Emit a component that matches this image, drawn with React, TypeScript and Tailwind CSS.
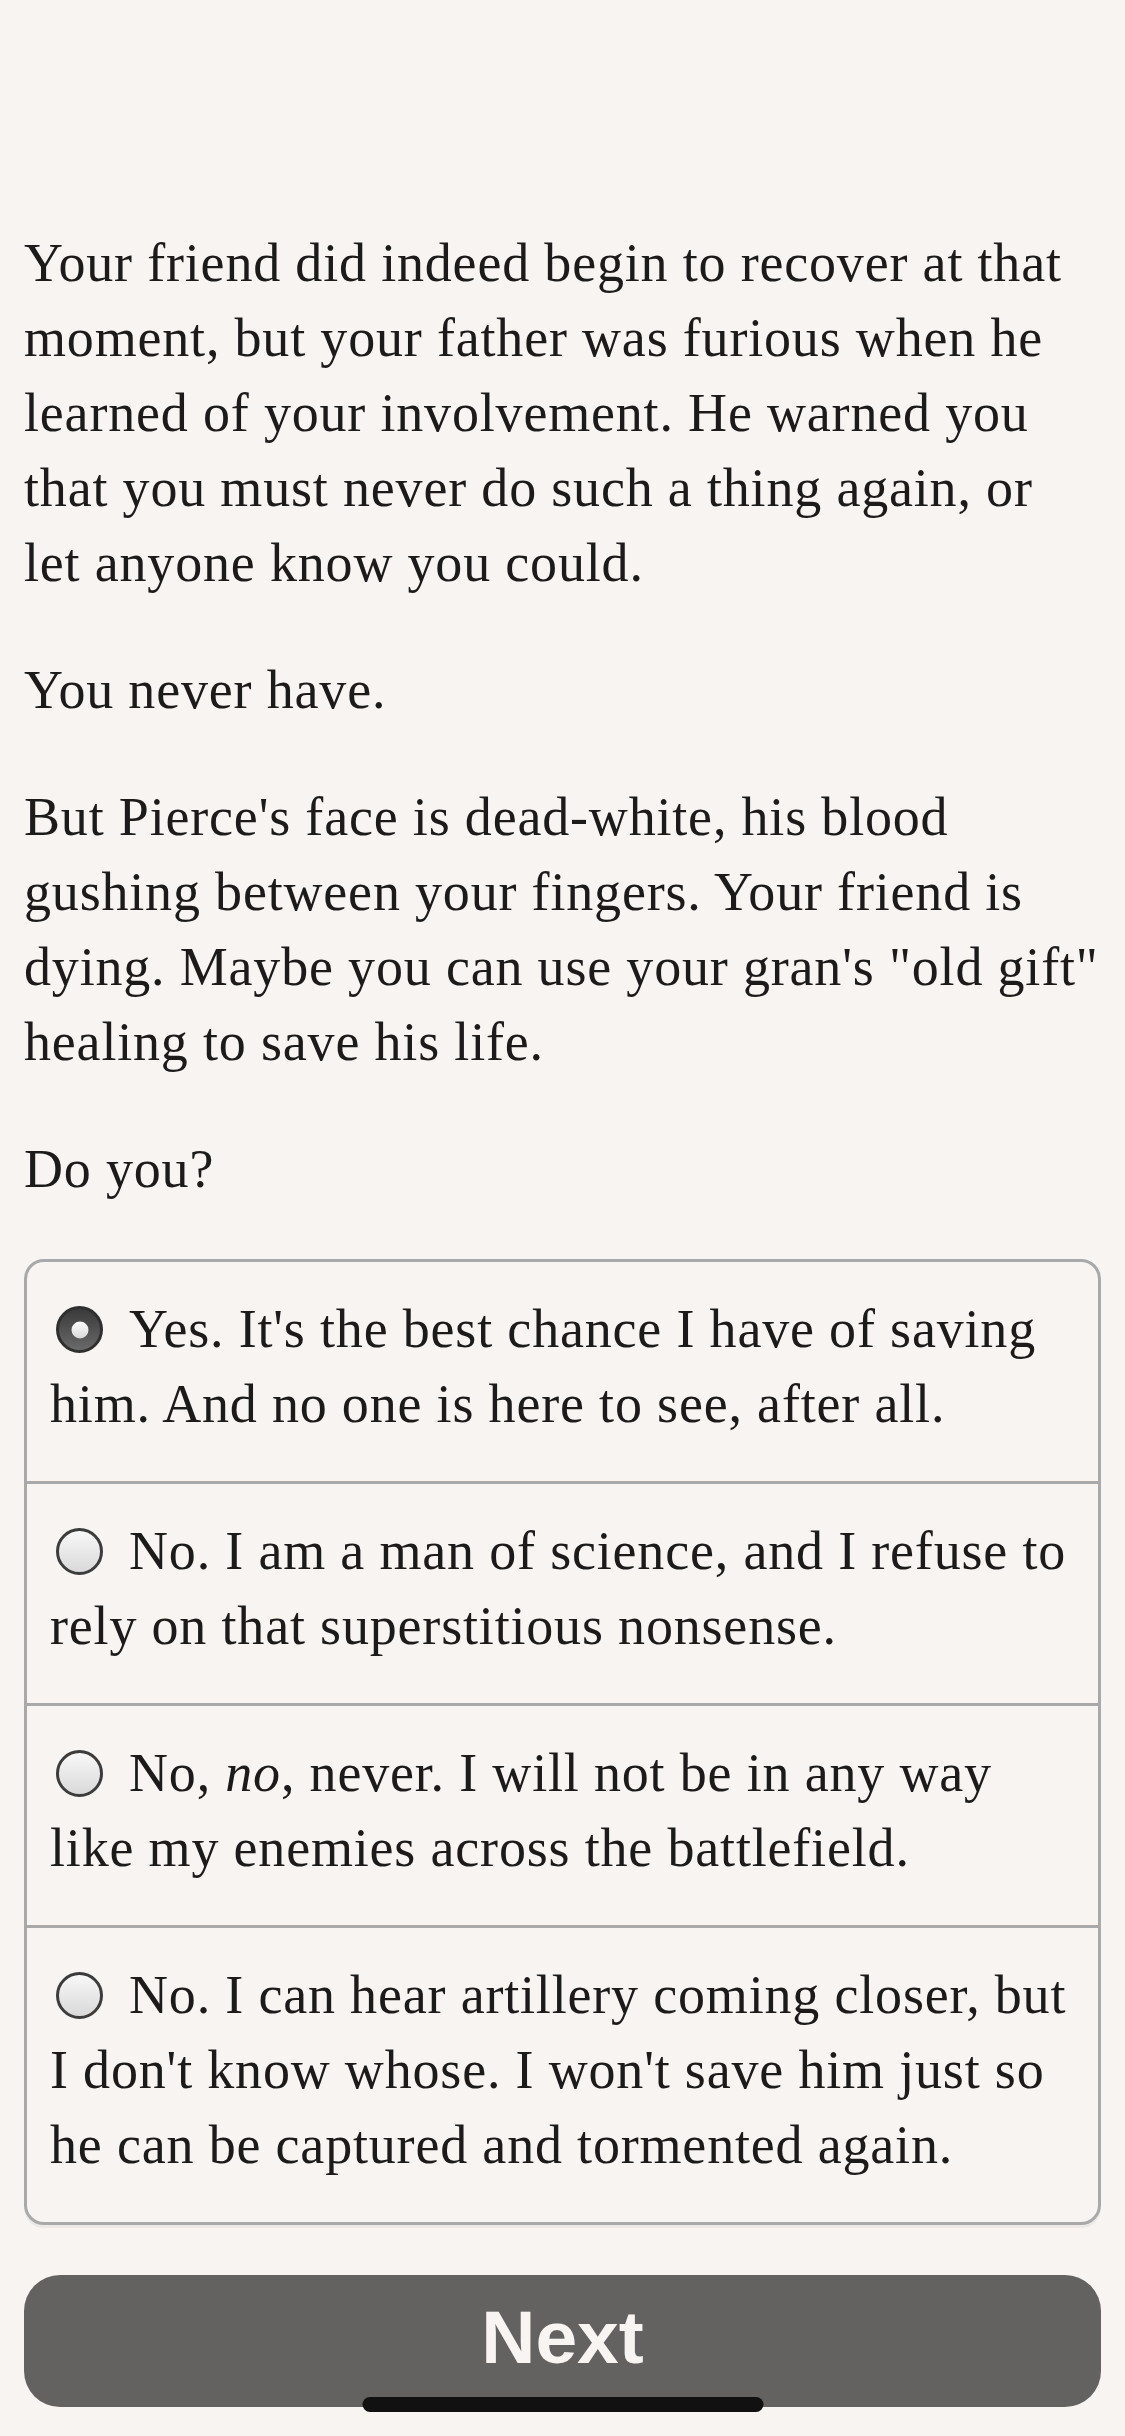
import { useState } from "react";

const options = [
  { id: "yes", label: <>Yes. It's the best chance I have of saving him. And no one is here to see, after all.</> },
  { id: "science", label: <>No. I am a man of science, and I refuse to rely on that superstitious nonsense.</> },
  {
    id: "never",
    label: (
      <>
        No, <em>no</em>, never. I will not be in any way like my enemies across the battlefield.
      </>
    ),
  },
  {
    id: "artillery",
    label: <>No. I can hear artillery coming closer, but I don't know whose. I won't save him just so he can be captured and tormented again.</>,
  },
];

function Radio({ checked }: { checked: boolean }) {
  if (checked) {
    return (
      <span className="relative mr-[26px] ml-[6px] inline-block h-[47px] w-[47px] rounded-full border-[3px] border-[#2f2f2f] bg-gradient-to-b from-[#3a3a3a] to-[#6a6a6a] align-[-6px]">
        <span className="absolute top-1/2 left-1/2 h-[17px] w-[17px] -translate-x-1/2 -translate-y-1/2 rounded-full bg-gradient-to-b from-[#ffffff] to-[#d8d8d8]" />
      </span>
    );
  }
  return (
    <span className="mr-[26px] ml-[6px] inline-block h-[47px] w-[47px] rounded-full border-[3px] border-[#3c3c3c] bg-gradient-to-b from-[#f8f8f8] to-[#d9d9d9] align-[-6px]" />
  );
}

export default function App() {
  const [choice, setChoice] = useState("yes");

  return (
    <main
      className="min-h-[2436px] bg-[#f7f4f1] px-[24px] pt-[226px] text-[#1c1b1a]"
      style={{ fontFamily: '"Liberation Serif", "Times New Roman", serif' }}
    >
      <div className="space-y-[52px] text-[54px] leading-[75px] tracking-[0.82px]">
        <p>
          Your friend did indeed begin to recover at that moment, but your father was furious when he learned of your
          involvement. He warned you that you must never do such a thing again, or let anyone know you could.
        </p>
        <p>You never have.</p>
        <p>
          But Pierce's face is dead-white, his blood gushing between your fingers. Your friend is dying. Maybe you can
          use your gran's "old gift" healing to save his life.
        </p>
        <p>Do you?</p>
      </div>

      <div className="mt-[52px] overflow-hidden rounded-[20px] border-[3px] border-[#a9a9a9] shadow-[0_3px_0_#ece9e6]">
        {options.map((option, i) => (
          <div
            key={option.id}
            onClick={() => setChoice(option.id)}
            className={`cursor-pointer px-[23px] pt-[30px] pb-[39px] text-[54px] leading-[75px] tracking-[0.82px] ${
              i > 0 ? "border-t-[3px] border-[#a9a9a9]" : ""
            }`}
          >
            <Radio checked={choice === option.id} />
            {option.label}
          </div>
        ))}
      </div>

      <button
        type="button"
        className="mt-[50px] flex h-[132px] w-full items-center justify-center rounded-[36px] bg-[#636261] pb-[8px] text-[75px] font-bold text-[#f7f4f1]"
        style={{ fontFamily: '"Liberation Sans", Arial, sans-serif' }}
      >
        Next
      </button>

      <div className="pointer-events-none fixed bottom-[24px] left-1/2 h-[15px] w-[401px] -translate-x-1/2 rounded-full bg-[#111111]" />
    </main>
  );
}
